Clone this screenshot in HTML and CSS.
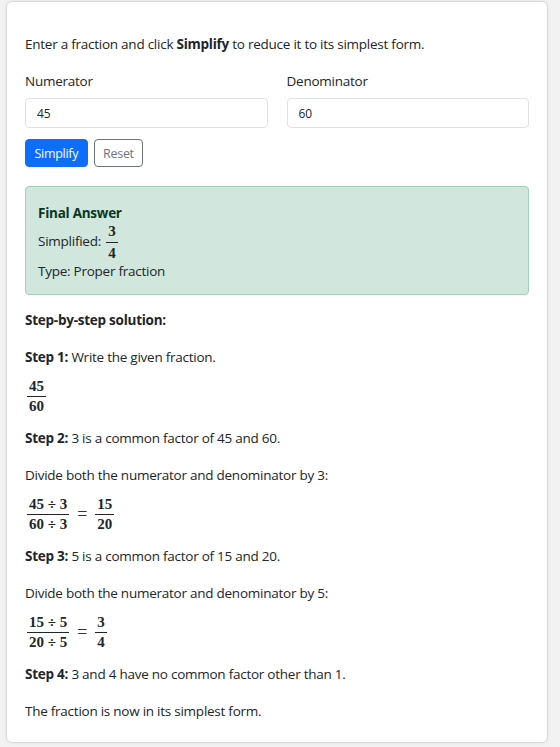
FILE: index.html
```html
<!DOCTYPE html>
<html lang="en">
<head>
<meta charset="utf-8">
<title>Fraction Simplifier</title>
<link rel="stylesheet" href="styles.css">
</head>
<body>
<div class="card">
  <div class="card-body">
    <p class="intro">Enter a fraction and click <b>Simplify</b> to reduce it to its simplest form.</p>
    <div class="row">
      <div class="col">
        <label class="form-label" for="num">Numerator</label>
        <input class="form-control" id="num" type="text" value="45">
      </div>
      <div class="col">
        <label class="form-label" for="den">Denominator</label>
        <input class="form-control" id="den" type="text" value="60">
      </div>
    </div>
    <div class="btns">
      <button class="btn btn-primary">Simplify</button>
      <button class="btn btn-outline">Reset</button>
    </div>
    <div class="alert">
      <div class="alert-title">Final Answer</div>
      <div class="alert-line">Simplified: <span class="frac big"><span class="fn">3</span><span class="fd">4</span></span></div>
      <div class="alert-line">Type: Proper fraction</div>
    </div>
    <p><b>Step-by-step solution:</b></p>
    <p><b>Step 1:</b> Write the given fraction.</p>
    <div class="math"><span class="frac"><span class="fn">45</span><span class="fd">60</span></span></div>
    <p><b>Step 2:</b> 3 is a common factor of 45 and 60.</p>
    <p>Divide both the numerator and denominator by 3:</p>
    <div class="math"><span class="frac"><span class="fn">45 ÷ 3</span><span class="fd">60 ÷ 3</span></span><span class="eq">=</span><span class="frac"><span class="fn">15</span><span class="fd">20</span></span></div>
    <p><b>Step 3:</b> 5 is a common factor of 15 and 20.</p>
    <p>Divide both the numerator and denominator by 5:</p>
    <div class="math"><span class="frac"><span class="fn">15 ÷ 5</span><span class="fd">20 ÷ 5</span></span><span class="eq">=</span><span class="frac"><span class="fn">3</span><span class="fd">4</span></span></div>
    <p><b>Step 4:</b> 3 and 4 have no common factor other than 1.</p>
    <p class="last">The fraction is now in its simplest form.</p>
  </div>
</div>
</body>
</html>
```
FILE: styles.css
```css
html, body {
  margin: 0;
  padding: 0;
}
body {
  background: #f2f2f2;
  font-family: "Open Sans", "Noto Sans", sans-serif;
  font-size: 13.5px;
  letter-spacing: -0.25px;
  line-height: 21px;
  color: #212529;
  height: 747px;
  overflow: hidden;
}
.card {
  margin: 1px 0 0 6px;
  width: 540px;
  height: 740px;
  background: #fff;
  border: 1px solid #d9d9d9;
  border-radius: 6px;
  box-shadow: 0 0 4px rgba(0,0,0,0.06);
}
.card-body {
  padding: 32px 18px 0 18px;
}
p {
  margin: 0 0 16px 0;
}
b {
  font-weight: 700;
}
.row {
  display: flex;
  gap: 19px;
}
.col {
  flex: 1;
  display: flex;
  flex-direction: column;
}
.form-label {
  margin-bottom: 6px;
}
.form-control {
  box-sizing: border-box;
  height: 30px;
  border: 1px solid #dee2e6;
  border-radius: 4px;
  padding: 0 11px;
  font-family: inherit;
  font-size: 12px;
  letter-spacing: -0.2px;
  color: #212529;
  background: #fff;
}
.btns {
  display: flex;
  gap: 6px;
  margin-top: 11px;
}
.btn {
  box-sizing: border-box;
  height: 28px;
  border-radius: 4px;
  padding: 0 8.5px;
  font-family: inherit;
  font-size: 12.5px;
  letter-spacing: -0.3px;
}
.btn-primary {
  background: #0d6efd;
  border: 1px solid #0d6efd;
  color: #fff;
}
.btn-outline {
  background: #fff;
  border: 1px solid #6c757d;
  color: #6c757d;
}
.alert {
  margin-top: 19px;
  margin-bottom: 15px;
  background: #d1e7dd;
  border: 1px solid #a3cfbb;
  border-radius: 4px;
  padding: 16px 12px 12px 12px;
  color: #212529;
}
.alert-title {
  font-weight: 700;
  color: #0a3622;
}
.frac {
  display: inline-flex;
  flex-direction: column;
  align-items: center;
  vertical-align: middle;
  font-family: "Liberation Serif", "DejaVu Serif", serif;
  font-weight: 700;
  font-size: 15px;
  line-height: 19px;
  letter-spacing: 0;
  margin: 0 2px;
}
.frac.big {
  line-height: 21px;
  margin: -3px 2px;
}
.fn {
  border-bottom: 1px solid #212529;
  padding: 0 2px;
  align-self: stretch;
  text-align: center;
}
.fd {
  padding: 0 2px;
}
.math {
  display: flex;
  align-items: center;
  margin: -7px 0 12px 0;
}
.eq {
  font-family: "Liberation Serif", serif;
  font-size: 18px;
  margin: 0 6px;
  color: #333;
}
.last {
  margin-bottom: 0;
}
```
